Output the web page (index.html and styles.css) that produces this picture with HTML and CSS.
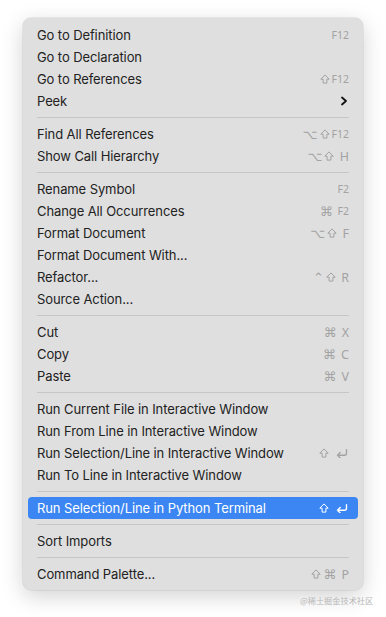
FILE: index.html
```html
<!DOCTYPE html>
<html lang="en">
<head>
  <meta charset="UTF-8" />
  <meta name="viewport" content="width=device-width, initial-scale=1.0"/>
  <title>Context Menu</title>
  <link rel="stylesheet" href="styles.css">
</head>
<body>

  <svg width="0" height="0" style="position:absolute">
    <symbol id="shift" viewBox="0 0 10 10">
      <path d="M5 0.9 L9.2 5.2 H6.9 V9.1 H3.1 V5.2 H0.8 Z" fill="none" stroke="currentColor" stroke-width="1" stroke-linejoin="round"/>
    </symbol>
    <symbol id="ret" viewBox="0 0 12 9">
      <path d="M10.5 0.8 V4.2 Q10.5 6.2 8.5 6.2 H1.5 M4.2 3.5 L1.5 6.2 L4.2 8.9" fill="none" stroke="currentColor" stroke-width="1.4" stroke-linecap="round" stroke-linejoin="round"/>
    </symbol>
  </svg>

  <div class="menu">
    <div class="item"><span>Go to Definition</span><span class="keys small">F12</span></div>
    <div class="item"><span>Go to Declaration</span></div>
    <div class="item"><span>Go to References</span><span class="keys small"><svg class="sh"><use href="#shift"/></svg>F12</span></div>
    <div class="item"><span>Peek</span><span class="arrow">
      <svg width="8" height="10" viewBox="0 0 8 10"><path d="M2 1.5 L6 5 L2 8.5" fill="none" stroke="#111" stroke-width="1.8" stroke-linecap="round" stroke-linejoin="round"/></svg>
    </span></div>
    <div class="sep"></div>

    <div class="item"><span>Find All References</span><span class="keys small"><i>⌥</i><svg class="sh"><use href="#shift"/></svg>F12</span></div>
    <div class="item"><span>Show Call Hierarchy</span><span class="keys"><i>⌥</i><svg class="sh"><use href="#shift"/></svg> H</span></div>
    <div class="sep"></div>

    <div class="item"><span>Rename Symbol</span><span class="keys small">F2</span></div>
    <div class="item"><span>Change All Occurrences</span><span class="keys small"><i>⌘</i> F2</span></div>
    <div class="item"><span>Format Document</span><span class="keys"><i>⌥</i><svg class="sh"><use href="#shift"/></svg> F</span></div>
    <div class="item"><span>Format Document With...</span></div>
    <div class="item"><span>Refactor...</span><span class="keys"><i>⌃</i><svg class="sh"><use href="#shift"/></svg> R</span></div>
    <div class="item"><span>Source Action...</span></div>
    <div class="sep"></div>

    <div class="item"><span>Cut</span><span class="keys"><i>⌘</i> X</span></div>
    <div class="item"><span>Copy</span><span class="keys"><i>⌘</i> C</span></div>
    <div class="item"><span>Paste</span><span class="keys"><i>⌘</i> V</span></div>
    <div class="sep"></div>

    <div class="item"><span>Run Current File in Interactive Window</span></div>
    <div class="item"><span>Run From Line in Interactive Window</span></div>
    <div class="item"><span>Run Selection/Line in Interactive Window</span><span class="keys"><svg class="sh"><use href="#shift"/></svg><svg class="ret"><use href="#ret"/></svg></span></div>
    <div class="item"><span>Run To Line in Interactive Window</span></div>
    <div class="sep"></div>

    <div class="item active"><span>Run Selection/Line in Python Terminal</span><span class="keys"><svg class="sh"><use href="#shift"/></svg><svg class="ret"><use href="#ret"/></svg></span></div>
    <div class="sep"></div>

    <div class="item"><span>Sort Imports</span></div>
    <div class="sep"></div>

    <div class="item"><span>Command Palette...</span><span class="keys"><svg class="sh"><use href="#shift"/></svg><i>⌘</i> P</span></div>
  </div>

  <div class="watermark">@稀土掘金技术社区</div>

</body>
</html>
```

FILE: styles.css
```css
* {
  box-sizing: border-box;
}

body {
  margin: 0;
  background: #fff;
  font-family: Inter, "Noto Sans", sans-serif;
  width: 386px;
  height: 617px;
  overflow: hidden;
  padding: 18px 0 0 23px;
}

.menu {
  width: 340px;
  background: #dfdfdf;
  border-radius: 8px;
  padding: 6px 5px 5px 5px;
  box-shadow: 0 0 0 0.5px rgba(0, 0, 0, 0.12), 0 6px 22px rgba(0, 0, 0, 0.18);
}

.item {
  display: flex;
  align-items: center;
  height: 22px;
  padding: 0 9px 0 9px;
  font-size: 13px;
  color: #222;
  border-radius: 4px;
  letter-spacing: -0.1px;
}

.item .keys {
  margin-left: auto;
  display: flex;
  align-items: center;
  white-space: pre;
  color: #a3a3a3;
  font-size: 12.5px;
  letter-spacing: 0;
  font-family: "Noto Sans", sans-serif;
}

.item .keys.small {
  font-size: 10.5px;
}

.keys i {
  font-style: normal;
  font-family: "DejaVu Sans", sans-serif;
  font-size: 13px;
  margin-right: 2px;
}

.keys .sh {
  width: 10px;
  height: 10px;
  margin-right: 2px;
}

.keys .ret {
  width: 12px;
  height: 9px;
  margin-left: 5px;
  margin-right: 1px;
}

.arrow {
  margin-left: auto;
  margin-right: 1px;
  display: flex;
}

.item.active {
  background: #3b86f2;
  color: #fff;
}

.item.active .keys {
  color: #fff;
}

.item.active .sh path {
  stroke-width: 1.4;
}

.sep {
  height: 1px;
  background: #c6c6c6;
  margin: 5px 9px;
}

.watermark {
  margin: 4px 0 0 277px;
  font-size: 8.2px;
  white-space: nowrap;
  color: #b8b8b8;
  font-family: "Noto Sans CJK SC", sans-serif;
}
```
